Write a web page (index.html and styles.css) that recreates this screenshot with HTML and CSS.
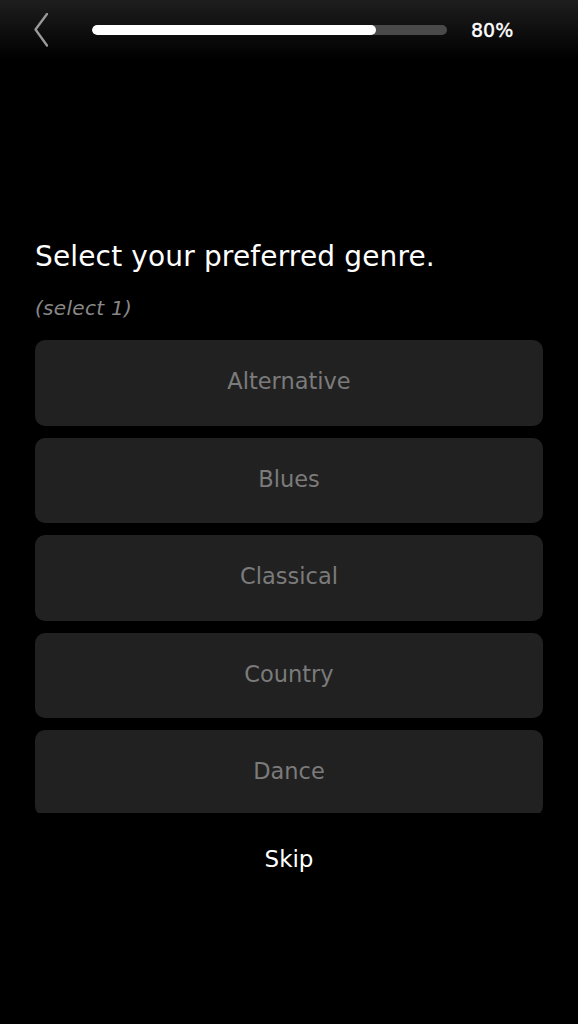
FILE: index.html
```html
<!DOCTYPE html>
<html lang="en">
<head>
<meta charset="utf-8">
<title>Select genre</title>
<link rel="stylesheet" href="styles.css">
</head>
<body>
<header class="topbar">
  <button class="back" aria-label="Back">
    <svg width="14" height="34" viewBox="0 0 14 34" fill="none">
      <path d="M13 1 L1.5 16.5 L13 32.5" stroke="#9a9a9a" stroke-width="2.3" stroke-linecap="round" stroke-linejoin="round"/>
    </svg>
  </button>
  <div class="progress"><div class="progress-fill" style="width:80%"></div></div>
  <span class="percent">80%</span>
</header>
<main class="content">
  <h1 class="title">Select your preferred genre.</h1>
  <p class="hint">(select 1)</p>
  <div class="options">
    <div class="option">Alternative</div>
    <div class="option">Blues</div>
    <div class="option">Classical</div>
    <div class="option">Country</div>
    <div class="option">Dance</div>
  </div>
  <div class="skip">Skip</div>
</main>
</body>
</html>
```
FILE: styles.css
```css
html, body {
  margin: 0;
  padding: 0;
  background: #000;
}
body {
  font-family: "DejaVu Sans", sans-serif;
  color: #fff;
  width: 578px;
  height: 1024px;
  overflow: hidden;
}
.topbar {
  height: 60px;
  display: flex;
  align-items: center;
  padding-left: 34px;
  background: linear-gradient(#1e1e1e 0, #0a0a0a 40px, #000 60px);
}
.back {
  background: none;
  border: 0;
  padding: 0;
  width: 14px;
  height: 34px;
  display: flex;
}
.progress {
  margin-left: 44px;
  width: 355px;
  height: 10px;
  border-radius: 5px;
  background: #4a4a4a;
  overflow: hidden;
}
.progress-fill {
  height: 100%;
  border-radius: 5px;
  background: #fff;
}
.percent {
  margin-left: 24px;
  font-size: 19px;
  line-height: 24px;
  color: #fff;
  -webkit-text-stroke: 0.4px #fff;
}
.content {
  padding: 180px 35px 0;
}
.title {
  margin: 0;
  font-size: 28px;
  line-height: 34px;
  letter-spacing: 0.15px;
  font-weight: normal;
  color: #fff;
}
.hint {
  margin: 22px 0 0;
  font-size: 20px;
  line-height: 24px;
  letter-spacing: 0.3px;
  font-style: italic;
  color: #888;
}
.options {
  margin-top: 20px;
  height: 473px;
  overflow: hidden;
  display: flex;
  flex-direction: column;
  gap: 12px;
}
.option {
  flex: 0 0 85.5px;
  border-radius: 10px;
  background: #212121;
  display: flex;
  align-items: center;
  justify-content: center;
  font-size: 22.5px;
  line-height: 1;
  color: #7b7b7b;
  padding-bottom: 3px;
  box-sizing: border-box;
}
.skip {
  margin-top: 32px;
  text-align: center;
  font-size: 23px;
  line-height: 28px;
  color: #fff;
}
```
